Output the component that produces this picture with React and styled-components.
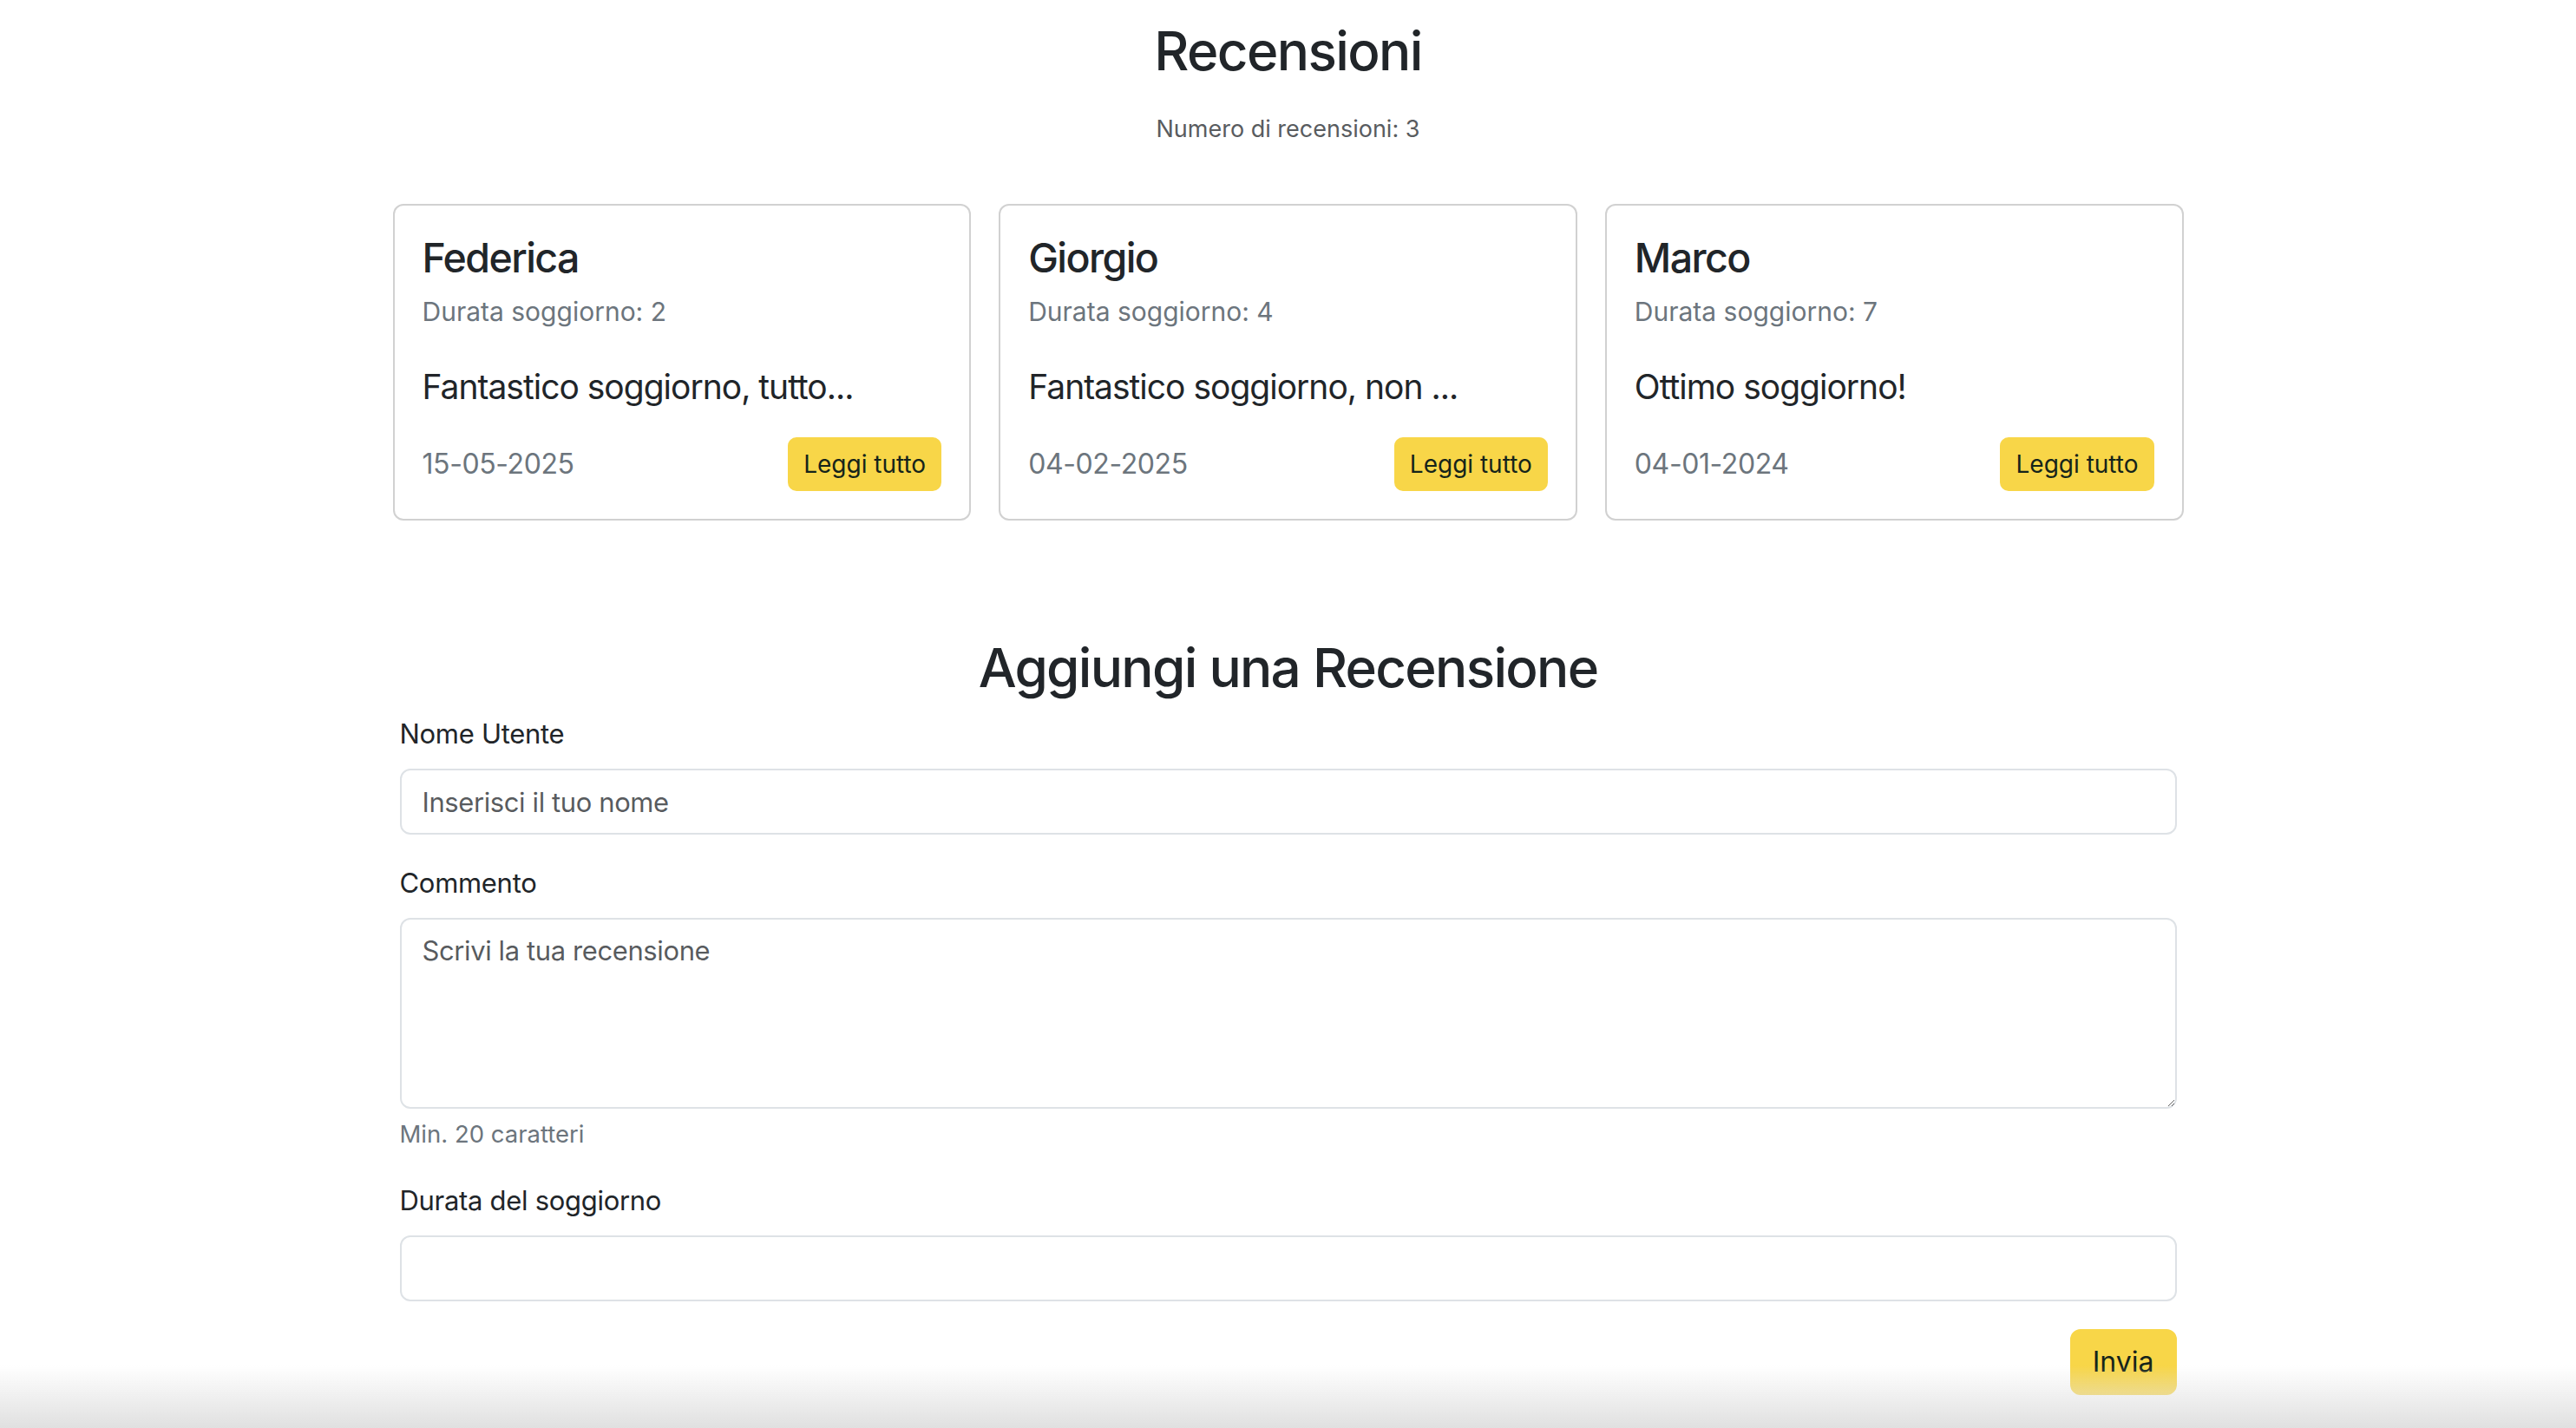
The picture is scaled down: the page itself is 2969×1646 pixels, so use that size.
import React from 'react'
import styled, { createGlobalStyle } from 'styled-components'

const GlobalStyle = createGlobalStyle`
	* {
		box-sizing: border-box;
	}
	body {
		margin: 0;
		background: #fff;
		color: #212529;
		font-family: Inter, "Noto Sans", "Liberation Sans", sans-serif;
	}
`

const Page = styled.div`
	width: 2064px;
	margin: 0 auto;
	padding-top: 20px;
	padding-bottom: 40px;
`

const Title = styled.h2`
	margin: 0;
	font-size: 62px;
	line-height: 77px;
	font-weight: 500;
	text-align: center;
	letter-spacing: -1.6px;
`

const Count = styled.p`
	margin: 31px 0 0;
	font-size: 27px;
	line-height: 42px;
	color: #595c5f;
	text-align: center;
`

const CardGrid = styled.div`
	display: grid;
	grid-template-columns: repeat(3, 1fr);
	gap: 32px;
	margin-top: 65px;
`

const Card = styled.div`
	display: flex;
	flex-direction: column;
	border: 2px solid rgba(0, 0, 0, 0.18);
	border-radius: 12px;
	background: #fff;
	padding: 31px 32px 32px;
`

const Name = styled.h4`
	margin: 0;
	font-size: 46.5px;
	line-height: 58px;
	font-weight: 500;
	letter-spacing: -1.6px;
`

const Stay = styled.h6`
	margin: 16px 0 0;
	font-size: 30px;
	line-height: 34px;
	font-weight: 400;
	color: #6c757d;
`

const Comment = styled.p`
	margin: 46px 0 0;
	font-size: 39px;
	line-height: 48px;
	font-weight: 400;
	letter-spacing: -1px;
`

const CardFooter = styled.div`
	display: flex;
	align-items: center;
	justify-content: space-between;
	margin-top: 34px;
`

const DateText = styled.span`
	font-size: 32px;
	line-height: 48px;
	color: #6c757d;
	letter-spacing: -0.4px;
`

const Button = styled.button`
	font-family: inherit;
	border: 2px solid #f8d648;
	background: #f8d648;
	color: #15241a;
	cursor: pointer;
	font-size: ${props => (props.small ? '28px' : '32px')};
	line-height: ${props => (props.small ? '42px' : '48px')};
	padding: ${props => (props.small ? '8px 16px' : '12px 24px')};
	border-radius: ${props => (props.small ? '10px' : '12px')};
`

const FormSection = styled.section`
	margin-top: 131px;
	padding: 0 8px;
`

const Heading = styled.h2`
	margin: 0 0 14px;
	font-size: 62px;
	line-height: 77px;
	font-weight: 500;
	text-align: center;
	letter-spacing: -1.7px;
`

const Field = styled.div`
	margin-bottom: 32px;
`

const Label = styled.label`
	display: block;
	margin-bottom: 16px;
	font-size: 31px;
	line-height: 48px;
	letter-spacing: -0.3px;
`

const fieldStyles = `
	display: block;
	width: 100%;
	padding: 12px 24px;
	font-family: inherit;
	font-size: 31px;
	line-height: 48px;
	letter-spacing: -0.4px;
	color: #212529;
	background: #fff;
	border: 2px solid #dee2e6;
	border-radius: 12px;
	outline: none;

	&::placeholder {
		color: rgba(33, 37, 41, 0.75);
	}
`

const Input = styled.input`
	${fieldStyles}
	height: 76px;
`

const TextArea = styled.textarea`
	${fieldStyles}
	height: 220px;
	resize: vertical;
`

const Hint = styled.div`
	margin-top: 8px;
	font-size: 27.5px;
	line-height: 42px;
	color: #6c757d;
`

const Actions = styled.div`
	display: flex;
	justify-content: flex-end;
`

const BottomShade = styled.div`
	position: fixed;
	left: 0;
	right: 0;
	bottom: 0;
	height: 72px;
	pointer-events: none;
	background: linear-gradient(to bottom, rgba(228, 228, 228, 0), rgba(224, 224, 224, 1));
`

const reviews = [
	{ name: 'Federica', stay: 2, text: 'Fantastico soggiorno, tutto...', date: '15-05-2025' },
	{ name: 'Giorgio', stay: 4, text: 'Fantastico soggiorno, non ...', date: '04-02-2025' },
	{ name: 'Marco', stay: 7, text: 'Ottimo soggiorno!', date: '04-01-2024' },
]

const ReviewCard = ({ name, stay, text, date }) => (
	<Card>
		<Name>{name}</Name>
		<Stay>Durata soggiorno: {stay}</Stay>
		<Comment>{text}</Comment>
		<CardFooter>
			<DateText>{date}</DateText>
			<Button small>Leggi tutto</Button>
		</CardFooter>
	</Card>
)

const App = () => (
	<>
		<GlobalStyle />
		<Page>
			<Title>Recensioni</Title>
			<Count>Numero di recensioni: {reviews.length}</Count>
			<CardGrid>
				{reviews.map(r => (
					<ReviewCard key={r.name} {...r} />
				))}
			</CardGrid>

			<FormSection>
				<Heading>Aggiungi una Recensione</Heading>
				<form onSubmit={e => e.preventDefault()}>
					<Field>
						<Label htmlFor="nome">Nome Utente</Label>
						<Input id="nome" type="text" placeholder="Inserisci il tuo nome" />
					</Field>
					<Field>
						<Label htmlFor="commento">Commento</Label>
						<TextArea id="commento" rows={4} placeholder="Scrivi la tua recensione" />
						<Hint>Min. 20 caratteri</Hint>
					</Field>
					<Field>
						<Label htmlFor="durata">Durata del soggiorno</Label>
						<Input id="durata" type="number" />
					</Field>
					<Actions>
						<Button type="submit">Invia</Button>
					</Actions>
				</form>
			</FormSection>
		</Page>
		<BottomShade />
	</>
)

export default App
